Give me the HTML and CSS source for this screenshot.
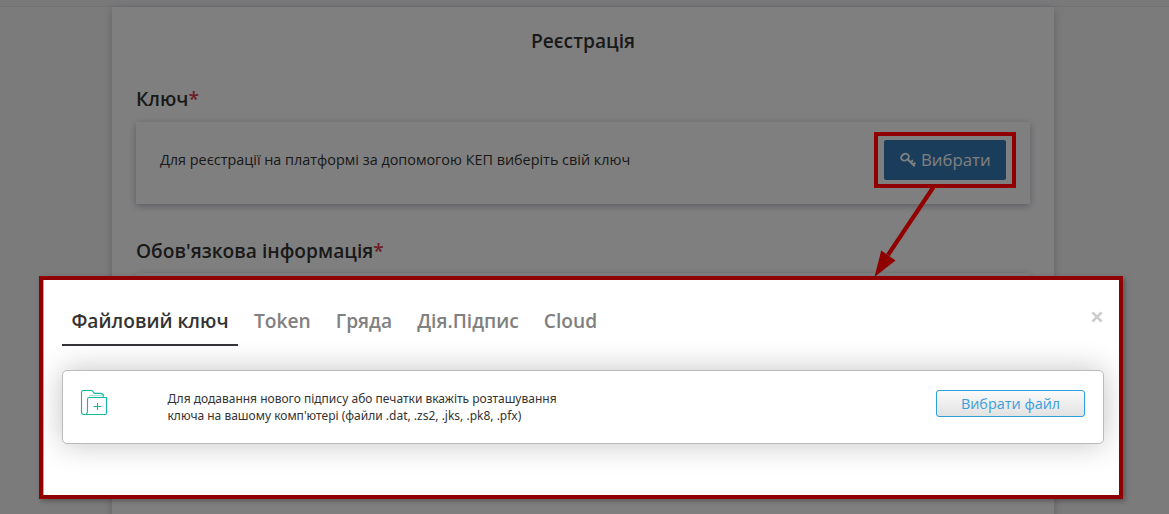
FILE: index.html
```html
<!DOCTYPE html>
<html lang="uk">
<head>
<meta charset="utf-8">
<title>Реєстрація</title>
<link rel="stylesheet" href="styles.css">
</head>
<body>
<header class="topbar"></header>
<main class="card">
  <h1 class="title">Реєстрація</h1>
  <h2 class="section key-section">Ключ<span class="required">*</span></h2>
  <section class="panel">
    <p class="panel-text">Для реєстрації на платформі за допомогою КЕП виберіть свій ключ</p>
    <button class="choose">
      <svg class="key" width="16" height="16" viewBox="0 0 16 16" fill="none" stroke="#fff">
        <ellipse cx="5" cy="5.2" rx="4" ry="3.2" transform="rotate(-28 5 5.2)" stroke-width="1.9"/>
        <path d="M7.6 7.2 14.7 14.2M10.8 10.4l2.2-2.1M13.2 12.7l2.2-2.1" stroke-width="2"/>
      </svg>
      <span>Вибрати</span>
    </button>
  </section>
  <h2 class="section">Обов'язкова інформація<span class="required">*</span></h2>
  <section class="panel next-panel"></section>
</main>
<div class="overlay"></div>
<div class="highlight"></div>
<svg class="arrow" width="70" height="94" viewBox="0 0 70 94">
  <path d="M62.5 2 17 70" stroke="#900000" stroke-width="4.2"/>
  <path d="M3.5 92 10.2 65.5 24.5 75.5z" fill="#900000"/>
</svg>
<div class="modal">
  <nav class="tabs">
    <a class="tab active">Файловий ключ</a>
    <a class="tab">Token</a>
    <a class="tab">Гряда</a>
    <a class="tab">Дія.Підпис</a>
    <a class="tab">Cloud</a>
    <svg class="close" width="12" height="12" viewBox="0 0 12 12"><path d="M1.4 1.4 10.6 10.6M10.6 1.4 1.4 10.6" stroke="#ccc" stroke-width="2.7"/></svg>
  </nav>
  <section class="file-card">
    <svg class="folder" width="28" height="28" viewBox="0 0 28 28" fill="none" stroke="#14b8a0" stroke-width="1.1">
      <path d="M7 24.5H4C2.3 24.5 1.5 23.7 1.5 22V2.2Q1.5 .5 3.2 .5H11Q12.3 .5 13 1.6L14.3 3.4H20.5Q23.5 3.4 23.5 6.6"/>
      <path d="M6 24.5Q7.5 23.5 7.5 21V9.2Q7.5 7.5 9.2 7.5H26.5V23Q26.5 24.5 25 24.5H6"/>
      <path d="M9 6.2Q9.6 5.5 11 5.5H21Q23.4 5.6 23.5 7.5" opacity=".4"/>
      <path d="M17.5 13v7M13.5 16.5h8"/>
    </svg>
    <p class="file-text">Для додавання нового підпису або печатки вкажіть розташування<br>ключа на вашому комп'ютері (файли .dat, .zs2, .jks, .pk8, .pfx)</p>
    <button class="choose-file">Вибрати файл</button>
  </section>
</div>
</body>
</html>
```
FILE: styles.css
```css
* { box-sizing: border-box; }
body {
  margin: 0;
  height: 514px;
  overflow: hidden;
  position: relative;
  background: #f6f6f6;
  font-family: "Open Sans", "Noto Sans", sans-serif;
  color: #333;
}
h1, h2, p { margin: 0; font-weight: 400; }
button { font-family: inherit; padding: 0; }
.topbar { height: 7px; background: #f2f2f5; border-bottom: 1px solid #e5e5ea; }
.card {
  width: 942px;
  height: 520px;
  margin-left: 112px;
  padding: 20px 24px;
  background: #fff;
  box-shadow: 0 2px 8px rgba(50, 50, 93, .25);
}
.title { font-size: 19.2px; line-height: 28px; font-weight: 600; text-align: center; }
.section { font-size: 19.2px; line-height: 28px; font-weight: 600; }
.key-section { margin-top: 30px; }
.required { color: #dc3d4d; }
.panel {
  display: flex;
  align-items: center;
  justify-content: space-between;
  height: 82px;
  margin: 9px 0 33px;
  padding: 0 24px;
  background: #fff;
  box-shadow: 0 2px 7px rgba(50, 50, 93, .35);
}
.panel-text { font-size: 14.4px; line-height: 20px; padding-bottom: 6px; }
.choose {
  display: flex;
  align-items: center;
  gap: 5px;
  width: 122px;
  height: 40px;
  margin-bottom: 6px;
  padding: 0 0 1px 16px;
  border: 0;
  border-radius: 2px;
  background: #337ab7;
  color: #fff;
  font-size: 16.8px;
}
.next-panel { margin-top: 8px; }
.overlay { position: absolute; inset: 0; background: rgba(0, 0, 0, .5); }
.highlight {
  position: absolute;
  left: 874px;
  top: 132px;
  width: 142px;
  height: 56px;
  border: 4px solid #900000;
}
.arrow { position: absolute; left: 871px; top: 185px; }
.modal {
  position: absolute;
  left: 39px;
  top: 276px;
  width: 1084px;
  height: 223px;
  padding: 24px 15px 0 19px;
  border: 4px solid #900000;
  background: #fff;
  box-shadow: 2px 2px 5px rgba(0, 0, 0, .3), inset 1px 0 #aaa;
}
.tabs { display: flex; height: 42px; }
.tab { margin-right: 25px; font-size: 19.2px; line-height: 34px; font-weight: 600; color: #808080; }
.tab.active {
  width: 176px;
  margin-right: 16px;
  border-bottom: 2px solid #333538;
  text-align: center;
  color: #333;
}
.close { margin: 7px 1px 0 auto; }
.file-card {
  display: flex;
  align-items: flex-start;
  height: 74px;
  margin-top: 24px;
  padding: 19px 18px 0 17px;
  border: 1px solid #bbb;
  border-radius: 5px;
  background: #fff;
  box-shadow: 0 0 30px rgba(0, 0, 0, .24);
  clip-path: inset(-45px -15px -45px -18px);
}
.file-text { margin-left: 59.5px; font-family: "Noto Sans", sans-serif; font-size: 12px; line-height: 17px; }
.choose-file {
  width: 149px;
  height: 27px;
  margin-left: auto;
  border: 1px solid #2e9fdd;
  border-radius: 3px;
  background: linear-gradient(#fafafa, #e2e2e2);
  color: #3a9edb;
  font-size: 14.4px;
}
```
